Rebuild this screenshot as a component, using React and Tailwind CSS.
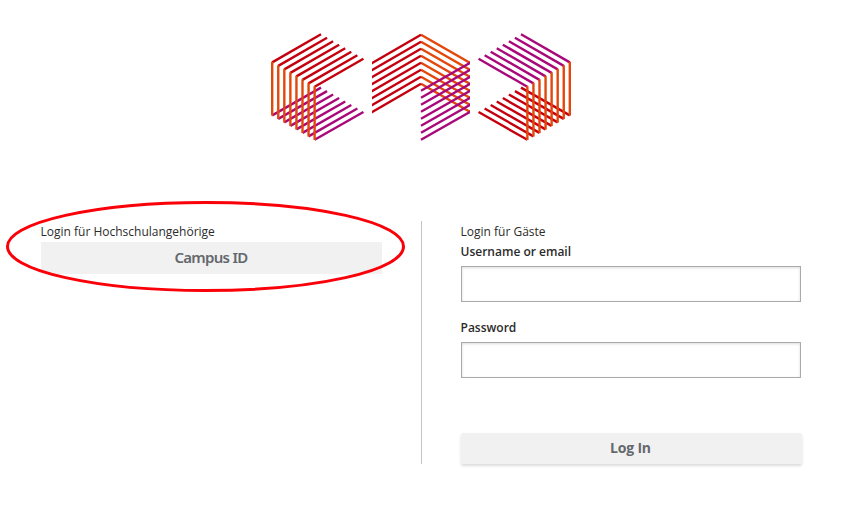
const steps = [0, 1, 2, 3, 4, 5, 6, 7];
const RED = "#c4000f";
const ORANGE = "#e2470b";
const PURPLE = "#a8087a";

function Logo() {
  return (
    <svg className="block h-[110px] w-[303px]" viewBox="270 32 303 110" fill="none" strokeWidth="2.4">
      <defs>
        <clipPath id="middle">
          <rect x="372" y="32" width="98" height="110" />
        </clipPath>
      </defs>
      {steps.map((i) => {
        const x = 6.06 * i;
        const y = 3.49 * i;
        return (
          <g key={i}>
            <path stroke={RED} d={`M${272.2 + x} ${62.4 + y}L${321 + x} ${34.3 + y}`} />
            <path stroke={PURPLE} d={`M${272.2 + x} ${115.4 + y}L${321 + x} ${87.6 + y}`} />
          </g>
        );
      })}
      {steps.map((i) => (
        <path key={i} stroke={ORANGE} d={`M${272.2 + 6.06 * i} ${61.8 + 3.49 * i}v53.8`} />
      ))}
      <g clipPath="url(#middle)">
        {steps.map((i) => (
          <g key={i}>
            <path stroke={ORANGE} d={`M421 ${34.8 + 7 * i}L471 ${63.4 + 7 * i}`} />
            <path stroke={RED} d={`M371 ${63.6 + 7 * i}L421 ${34.8 + 7 * i}`} />
          </g>
        ))}
        {steps.map((i) => (
          <path key={i} stroke={PURPLE} d={`M421 ${90.7 + 7 * i}L471 ${62.3 + 7 * i}`} />
        ))}
      </g>
      {steps.map((i) => {
        const x = 6.06 * i;
        const y = 3.49 * i;
        return (
          <g key={i}>
            <path stroke={RED} d={`M${521 - x} ${87.6 + y}L${569.8 - x} ${115.4 + y}`} />
            <path stroke={PURPLE} d={`M${521 - x} ${34.3 + y}L${569.8 - x} ${62.4 + y}`} />
          </g>
        );
      })}
      {steps.map((i) => (
        <path key={i} stroke={ORANGE} d={`M${569.8 - 6.06 * i} ${61.8 + 3.49 * i}v53.8`} />
      ))}
    </svg>
  );
}

function Field({ label, type }) {
  return (
    <label className="block font-semibold">
      <span className="-ml-[0.5px] block h-5 leading-5">{label}</span>
      <input
        type={type}
        className="mt-1 block h-9 w-full border border-[#aaaaaa] bg-white shadow-[inset_0_1px_3px_#dddddd] outline-none"
      />
    </label>
  );
}

export default function App() {
  return (
    <main className="h-[530px] w-[843px] overflow-hidden bg-white pt-8 font-['Open_Sans','Noto_Sans',sans-serif] text-xs text-[#2b2b2b]">
      <header className="ml-[270px]">
        <Logo />
      </header>
      <div className="mt-[79px] flex h-[243px]">
        <section className="relative w-[421px] pl-[41px]">
          <h2 className="-ml-[0.5px] h-[21px] leading-[21px]">Login für Hochschulangehörige</h2>
          <button className="block h-8 w-[341px] bg-[#f1f1f1] pr-px pb-0.5 font-['Noto_Sans',sans-serif] text-[15px] font-semibold tracking-[-0.7px] text-[#65686d]">
            Campus ID
          </button>
          <svg
            className="pointer-events-none absolute -top-5 left-[5px] h-[92px] w-[402px]"
            viewBox="0 0 402 92"
            fill="none"
          >
            <ellipse cx="200.5" cy="45.5" rx="198" ry="44" stroke="#fa0008" strokeWidth="3" />
          </svg>
        </section>
        <section className="w-[380px] border-l border-[#c4c4c4] pl-[39px]">
          <h2 className="-ml-[0.5px] h-[21px] leading-[21px]">Login für Gäste</h2>
          <form>
            <Field label="Username or email" type="text" />
            <div className="mt-4">
              <Field label="Password" type="password" />
            </div>
            <button
              type="button"
              className="mt-[55px] block h-[31px] w-[341px] rounded-xs bg-[#f1f1f1] pr-0.5 pb-0.5 text-sm font-bold tracking-[-0.2px] text-[#65686d] shadow-[0_2px_3px_#00000024]"
            >
              Log In
            </button>
          </form>
        </section>
      </div>
    </main>
  );
}
